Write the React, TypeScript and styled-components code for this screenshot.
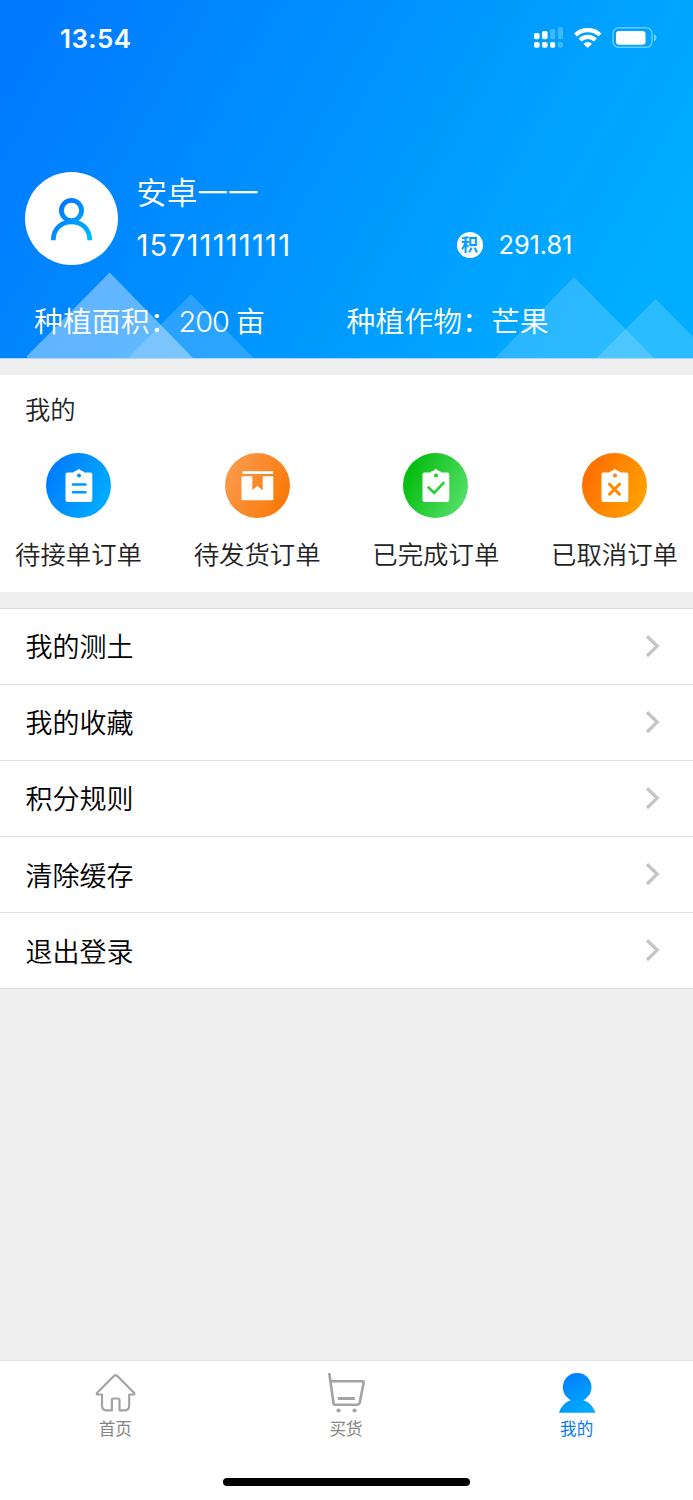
import React from "react";
import styled, { createGlobalStyle } from "styled-components";

const GlobalStyle = createGlobalStyle`
  * { box-sizing: border-box; }
  body {
    margin: 0;
    background: #efefef;
    font-family: Inter, "Noto Sans CJK SC", sans-serif;
  }
`;

const Page = styled.div`
  display: flex;
  flex-direction: column;
  width: 693px;
  height: 1500px;
  overflow: hidden;
  background: #efefef;
`;

const Header = styled.header`
  position: relative;
  flex: none;
  height: 359px;
  border-bottom: 1px solid #a9d5f7;
  color: #fff;
  background: linear-gradient(120deg, #007aff 5%, #00aeff 90%);
`;

const Mountains = styled.svg`
  position: absolute;
  left: 0;
  bottom: 0;
`;

const StatusBar = styled.div`
  display: flex;
  align-items: center;
  justify-content: space-between;
  height: 76px;
  padding: 0 36px 0 60px;
`;

const Clock = styled.span`
  font-size: 26px;
  font-weight: 600;
  letter-spacing: 0.4px;
`;

const StatusIcons = styled.svg`
  display: block;
`;

const Profile = styled.div`
  position: relative;
  display: flex;
  align-items: center;
  height: 93px;
  margin-top: 96px;
  padding-left: 25px;
`;

const Avatar = styled.div`
  flex: none;
  display: flex;
  width: 93px;
  height: 93px;
  border-radius: 50%;
  background: #fff;
`;

const Identity = styled.div`
  width: 320px;
  margin-left: 18.5px;
  padding-top: 1px;
`;

const Name = styled.div`
  font-size: 30.5px;
  font-weight: 350;
  line-height: 52px;
`;

const Phone = styled.div`
  font-size: 29.3px;
  font-weight: 400;
  line-height: 53px;
  letter-spacing: 1.2px;
`;

const Points = styled.div`
  align-self: flex-end;
  display: flex;
  align-items: center;
  gap: 16px;
  height: 41px;
  font-size: 25.4px;
  font-weight: 400;
  letter-spacing: -0.1px;
`;

const PointsBadge = styled.span`
  display: flex;
  align-items: center;
  justify-content: center;
  width: 26px;
  height: 26px;
  border-radius: 50%;
  background: #fff;
  color: #009fff;
  font-size: 17px;
  font-weight: 700;
  line-height: 26px;
`;

const Facts = styled.div`
  position: relative;
  display: flex;
  margin-top: 35px;
  padding-left: 34px;
  font-size: 28.9px;
  font-weight: 350;
  line-height: 44px;
  white-space: pre;
`;

const Fact = styled.div`
  width: 312.5px;
`;

const Amount = styled.span`
  letter-spacing: -1px;
`;

const Orders = styled.section`
  flex: none;
  height: 217px;
  margin-top: 16px;
  background: #fff;
  color: #222;
`;

const OrdersTitle = styled.h2`
  margin: 0;
  padding: 16px 0 0 25px;
  font-size: 25.3px;
  font-weight: 350;
  line-height: 38px;
`;

const OrderGrid = styled.div`
  display: flex;
  justify-content: space-between;
  padding: 24px 14.5px 0;
`;

const OrderItem = styled.div`
  display: flex;
  flex-direction: column;
  align-items: center;
  width: 128px;
  font-size: 25.4px;
  font-weight: 350;
  line-height: 38px;
  white-space: nowrap;
`;

const OrderBadge = styled.div<{ $from: string; $to: string }>`
  width: 65px;
  height: 65px;
  margin-bottom: 18px;
  border-radius: 50%;
  background: linear-gradient(115deg, ${(p) => p.$from} 10%, ${(p) => p.$to} 90%);
`;

const Menu = styled.nav`
  flex: none;
  margin-top: 16px;
  border-top: 1px solid #dcdcdd;
  background: #fff;
`;

const MenuRow = styled.div`
  display: flex;
  align-items: center;
  justify-content: space-between;
  height: 76.1px;
  padding: 0 33px 1.5px 25.5px;
  border-bottom: 1px solid #e0e0e1;
  color: #000;
  font-size: 27px;
  font-weight: 350;
`;

const TabBar = styled.footer`
  flex: none;
  display: flex;
  flex-direction: column;
  align-items: center;
  height: 140px;
  margin-top: auto;
  border-top: 1px solid #e3e3e3;
  background: #fff;
`;

const Tabs = styled.div`
  display: flex;
  width: 692px;
  height: 117px;
  margin-right: 1px;
`;

const Tab = styled.div<{ $active?: boolean }>`
  flex: 1;
  display: flex;
  flex-direction: column;
  align-items: center;
  padding-top: 9px;
  color: ${(p) => (p.$active ? "#007aff" : "#858585")};
  font-size: 16.6px;
  font-weight: 400;
  line-height: 24px;

  svg {
    margin-bottom: 3px;
  }
`;

const HomeIndicator = styled.div`
  width: 247px;
  height: 8px;
  border-radius: 4px;
  background: #000;
`;

const Clipboard = () => (
  <path
    d="M21.500 19.500h6c.6-1.200 1.800-1.700 3.300-1.700.4-1 1-1.500 2-1.500s1.700.5 2.100 1.500c1.500 0 2.700.5 3.300 1.700h6.100a2 2 0 0 1 2 2v25.500a2 2 0 0 1-2 2h-22.800a2 2 0 0 1-2-2v-25.500a2 2 0 0 1 2-2z"
    fill="#fff"
  />
);

const orders = [
  {
    label: "待接单订单",
    from: "#007aff",
    to: "#00aeff",
    icon: (
      <>
        <Clipboard />
        <circle cx="33" cy="22.500" r="2" fill="#0090ff" />
        <path d="M27 31.500h12.500M27 39.200h12.500" stroke="#0097ff" strokeWidth="2.600" strokeLinecap="round" />
      </>
    ),
  },
  {
    label: "待发货订单",
    from: "#fa9a4c",
    to: "#fa7806",
    icon: (
      <>
        <path d="M17.500 18.200h30.500v2.800h-30.500z" fill="#fff" />
        <path d="M17.500 23.200h9.800v14l5-4.200 5.400 4.200v-14h9.600a1 1 0 0 1 1 1v22a1 1 0 0 1-1 1h-29.800a1 1 0 0 1-1-1v-22a1 1 0 0 1 1-1z" fill="#fff" />
      </>
    ),
  },
  {
    label: "已完成订单",
    from: "#00bb09",
    to: "#55e06a",
    icon: (
      <>
        <Clipboard />
        <circle cx="33" cy="22.500" r="2" fill="#22c92b" />
        <path d="M25.500 34.500l5.700 5.300 9.300-10" fill="none" stroke="#2bcf38" strokeWidth="2.600" strokeLinecap="round" />
      </>
    ),
  },
  {
    label: "已取消订单",
    from: "#ff6d00",
    to: "#ffa200",
    icon: (
      <>
        <Clipboard />
        <circle cx="33" cy="22.500" r="2" fill="#ff8200" />
        <path d="M27.500 31.200l10 10M37.500 31.200l-10 10" stroke="#ff8600" strokeWidth="3" strokeLinecap="round" />
      </>
    ),
  },
];

const menu = ["我的测土", "我的收藏", "积分规则", "清除缓存", "退出登录"];

export default function App() {
  return (
    <Page>
      <GlobalStyle />
      <Header>
        <Mountains width="693" height="90" viewBox="0 268 693 90" fill="#fff">
          <path d="M109.700 272.500L193 358H27v-2z" fillOpacity="0.380" />
          <path d="M191 294.300L253.500 358H128z" fillOpacity="0.170" />
          <path d="M574.200 277L654 358H495z" fillOpacity="0.170" />
          <path d="M655.500 299L714 358H597z" fillOpacity="0.170" />
        </Mountains>
        <StatusBar>
          <Clock>13:54</Clock>
          <StatusIcons width="124" height="24" viewBox="533 26 124 24" fill="#fff">
            <rect x="534" y="33" width="5.600" height="6.200" rx="1.700" />
            <rect x="542" y="31" width="5.600" height="8.200" rx="1.700" />
            <rect x="550" y="29" width="5.200" height="10.200" rx="1.700" opacity="0.250" />
            <rect x="558" y="27" width="5" height="12.200" rx="1.700" opacity="0.250" />
            <rect x="534" y="42" width="5.600" height="5.800" rx="1.700" />
            <rect x="542" y="42" width="5.600" height="5.800" rx="1.700" />
            <rect x="550" y="42" width="5.200" height="5.800" rx="1.700" />
            <rect x="558" y="42" width="5" height="5.800" rx="1.700" opacity="0.250" />
            <g fill="none" stroke="#fff" strokeWidth="4.200">
              <path d="M575.500 35a17.800 17.800 0 0 1 24.500 0" />
              <path d="M580.100 40a11 11 0 0 1 15.300 0" />
            </g>
            <path d="M587.700 48l-4.400-4.300a6.400 6.400 0 0 1 8.800 0z" />
            <rect x="613" y="27.800" width="39" height="19.500" rx="5.600" fill="none" stroke="#fff" strokeOpacity="0.400" strokeWidth="1.500" />
            <path d="M654 34v7.200q2.600-1 2.600-3.600t-2.600-3.600z" opacity="0.450" />
            <rect x="616" y="31" width="29.500" height="13.800" rx="3" />
          </StatusIcons>
        </StatusBar>
        <Profile>
          <Avatar>
            <svg width="93" height="93" viewBox="0 0 93 93" fill="none">
              <defs>
                <linearGradient id="person" x1="28" y1="28" x2="66" y2="66" gradientUnits="userSpaceOnUse">
                  <stop stopColor="#006dff" />
                  <stop offset="1" stopColor="#00b8ff" />
                </linearGradient>
              </defs>
              <g stroke="url(#person)" strokeWidth="4.800">
                <circle cx="46.500" cy="38.500" r="10.100" />
                <path d="M28.300 68.200c0-11 7.600-18.400 18.200-18.400s18.200 7.400 18.200 18.400" />
              </g>
            </svg>
          </Avatar>
          <Identity>
            <Name>安卓一一</Name>
            <Phone>15711111111</Phone>
          </Identity>
          <Points>
            <PointsBadge>积</PointsBadge>
            <span>291.81</span>
          </Points>
        </Profile>
        <Facts>
          <Fact>
            种植面积：<Amount>200 亩</Amount>
          </Fact>
          <Fact>种植作物：芒果</Fact>
        </Facts>
      </Header>

      <Orders>
        <OrdersTitle>我的</OrdersTitle>
        <OrderGrid>
          {orders.map((o) => (
            <OrderItem key={o.label}>
              <OrderBadge $from={o.from} $to={o.to}>
                <svg width="65" height="65" viewBox="0 0 65 65">
                  {o.icon}
                </svg>
              </OrderBadge>
              {o.label}
            </OrderItem>
          ))}
        </OrderGrid>
      </Orders>

      <Menu>
        {menu.map((label) => (
          <MenuRow key={label}>
            {label}
            <svg width="15" height="24" viewBox="0 0 15 24" fill="none" stroke="#c5c5c9" strokeWidth="3.300">
              <path d="M2 2.200l10.200 9.900L2 22" />
            </svg>
          </MenuRow>
        ))}
      </Menu>

      <TabBar>
        <Tabs>
          <Tab>
            <svg width="44" height="44" viewBox="93 1370 44 44" fill="none" stroke="#a3a3a3" strokeWidth="2.200" strokeLinejoin="round">
              <path d="M102 1394.500h-4.200c-1.200 0-1.400-1-.6-1.800l16.400-16.400q2-1.800 4 0l16.400 16.400c.8.800.6 1.800-.6 1.800h-4.200v11.300q0 4.500-4.500 4.500h-5.200v-10.300q0-1.500-1.500-1.500h-4.600q-1.500 0-1.500 1.500v10.300h-5.400q-4.500 0-4.500-4.500z" />
            </svg>
            首页
          </Tab>
          <Tab>
            <svg width="44" height="44" viewBox="324.200 1370 44 44" fill="none" stroke="#a3a3a3" strokeWidth="2.600" strokeLinecap="round" strokeLinejoin="round">
              <path d="M329.500 1374l1.300 7.300h31.700q1.700 0 1.300 1.700l-4 20q-.4 1.700-2 1.700h-22.300q-1.600 0-1.800-1.700l-4-27.700" />
              <path d="M338 1398.500h17" strokeWidth="3" strokeLinecap="butt" />
              <circle cx="338.700" cy="1410.500" r="2.100" fill="#a3a3a3" stroke="none" />
              <circle cx="354.700" cy="1410.500" r="2.100" fill="#a3a3a3" stroke="none" />
            </svg>
            买货
          </Tab>
          <Tab $active>
            <svg width="44" height="44" viewBox="555.200 1370 44 44">
              <defs>
                <linearGradient id="me" x1="565" y1="1373" x2="588" y2="1413" gradientUnits="userSpaceOnUse">
                  <stop stopColor="#007dff" />
                  <stop offset="1" stopColor="#00adff" />
                </linearGradient>
              </defs>
              <path
                d="M571.300 1400.200a14.300 14.300 0 1 1 12.100 0c5.800 1.800 10 6 12.300 12.600h-36.500c2.100-6.600 6.300-10.800 12.100-12.600z"
                fill="url(#me)"
              />
            </svg>
            我的
          </Tab>
        </Tabs>
        <HomeIndicator />
      </TabBar>
    </Page>
  );
}
